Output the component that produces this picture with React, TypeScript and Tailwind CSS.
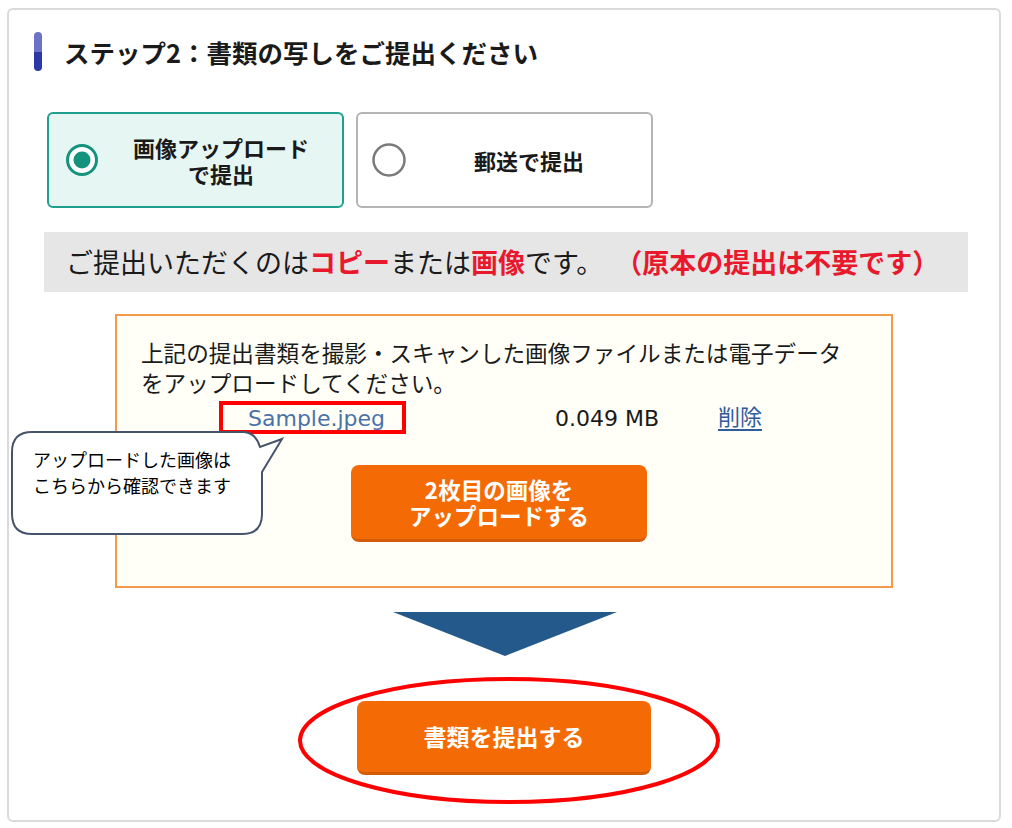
import React from "react";

const jp = { fontFamily: '"Noto Sans CJK JP", "Noto Sans", sans-serif' };
const latin = { fontFamily: '"DejaVu Sans", "Noto Sans CJK JP", sans-serif' };

const Radio = ({ checked }: { checked: boolean }) => (
  <svg width="36" height="36" viewBox="0 0 36 36" className="shrink-0">
    {checked ? (
      <>
        <circle cx="18" cy="18" r="14.5" fill="#fff" stroke="#13927e" strokeWidth="3" />
        <circle cx="18" cy="18" r="8.5" fill="#13927e" />
      </>
    ) : (
      <circle cx="18" cy="18" r="15.5" fill="#fff" stroke="#7a7a7a" strokeWidth="2.5" />
    )}
  </svg>
);

const OrangeButton = ({ children, className }: { children: React.ReactNode; className: string }) => (
  <button
    className={`flex flex-col items-center justify-center rounded-lg border-b-[3px] border-[#d35c06] bg-[#f46b05] font-bold text-white ${className}`}
  >
    {children}
  </button>
);

export default function App() {
  return (
    <div className="relative h-[828px] w-[1012px] overflow-hidden bg-white pl-[7px] pt-2 text-[#1a1a1a]" style={jp}>
      <div className="h-[814px] w-[994px] rounded-md border-2 border-[#dadada] pt-[22px]">
        {/* heading */}
        <div className="ml-[25px] flex items-center gap-[22px]">
          <div className="flex h-[39px] w-2 flex-col overflow-hidden rounded-sm">
            <div className="flex-1 bg-[#6c73c7]" />
            <div className="flex-1 bg-[#2a39a6]" />
          </div>
          <h2 className="text-[25.5px] font-bold leading-none">ステップ2：書類の写しをご提出ください</h2>
        </div>

        {/* choice */}
        <div className="ml-[38px] mt-[41px] flex gap-3">
          <div className="flex h-[96px] w-[297px] items-center rounded-md border-2 border-[#1fa08e] bg-[#e6f6f2] pl-[15px]">
            <Radio checked />
            <div className="flex-1 text-center text-[22px] font-bold leading-[26px]">
              画像アップロード
              <br />
              で提出
            </div>
          </div>
          <div className="flex h-[96px] w-[297px] items-center rounded-md border-2 border-[#b4b4b4] bg-white pl-[13px]">
            <Radio checked={false} />
            <div className="flex-1 text-center text-[22px] font-bold">郵送で提出</div>
          </div>
        </div>

        {/* notice band */}
        <div className="ml-[35px] mt-6 flex h-[60px] w-[924px] items-center bg-[#e6e6e6] pl-[22px] text-[27px]">
          ご提出いただくのは<span className="font-bold text-[#e8192c]">コピー</span>または
          <span className="font-bold text-[#e8192c]">画像</span>です。
          <span className="ml-[12px] font-bold text-[#e8192c]">（原本の提出は不要です）</span>
        </div>

        {/* upload box */}
        <div className="ml-[106px] mt-[22px] h-[274px] w-[778px] border-2 border-[#f49a4c] bg-[#fffff7] pl-6 pt-[22px]">
          <p className="text-[22.6px] leading-[30px]">
            上記の提出書類を撮影・スキャンした画像ファイルまたは電子データ
            <br />
            をアップロードしてください。
          </p>
          <div className="mt-[6px] flex h-[30px] items-center text-[22px] leading-[30px]">
            <span className="ml-[107px] w-[307px] text-[#4a72a8]" style={latin}>
              Sample.jpeg
            </span>
            <span className="w-[163px]" style={latin}>
              0.049 MB
            </span>
            <span className="relative -top-[4px] text-[#2f5c9c] underline underline-offset-4">削除</span>
          </div>
          <OrangeButton className="ml-[210px] mt-[31px] h-[77px] w-[296px] text-[22.5px] leading-[26px]">
            <span>2枚目の画像を</span>
            <span>アップロードする</span>
          </OrangeButton>
        </div>

        {/* arrow */}
        <div className="ml-[384px] mt-6">
          <svg width="224" height="44" viewBox="0 0 224 44">
            <polygon points="0,0 224,0 112,44" fill="#245a8b" />
          </svg>
        </div>

        {/* submit */}
        <OrangeButton className="ml-[348px] mt-[45px] h-[74px] w-[294px] text-[23px]">書類を提出する</OrangeButton>
      </div>

      {/* annotations */}
      <div className="absolute left-[219px] top-[401px] h-[33px] w-[187px] border-4 border-[#ff0000]" />

      <div className="absolute left-0 top-0 h-[545px] w-[300px]">
        <svg width="300" height="545" viewBox="0 0 300 545" className="absolute left-0 top-0">
          <path
            d="M 32 432 H 244 Q 256 433 260 447 L 282 439 L 262 472 V 514 Q 262 534 242 534 H 32 Q 12 534 12 514 V 452 Q 12 432 32 432 Z"
            fill="#fff"
            stroke="#46546b"
            strokeWidth="2"
          />
        </svg>
        <div className="absolute left-[33px] top-[446px] text-[18px] leading-[26px] text-black">
          アップロードした画像は
          <br />
          こちらから確認できます
        </div>
      </div>

      <svg width="430" height="135" viewBox="0 0 430 135" className="absolute left-[294px] top-[673px]">
        <ellipse cx="215" cy="67.5" rx="209" ry="61.5" fill="none" stroke="#ff0000" strokeWidth="4" />
      </svg>
    </div>
  );
}
